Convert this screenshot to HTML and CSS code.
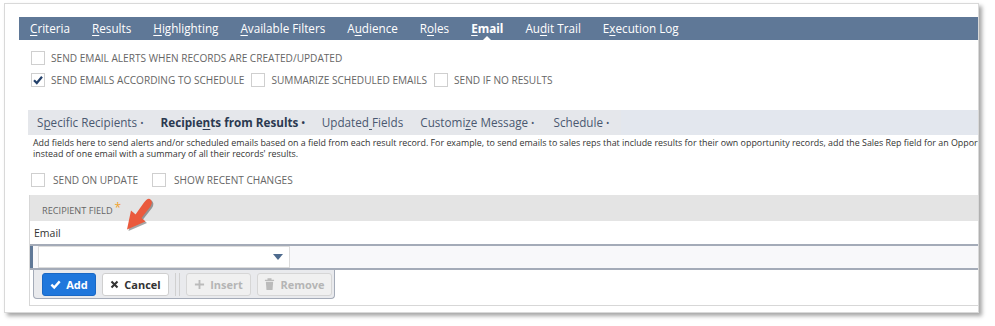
FILE: index.html
```html
<!DOCTYPE html>
<html>
<head>
<meta charset="utf-8">
<link rel="stylesheet" href="styles.css">
</head>
<body>
<div class="panel">
  <nav class="tabs">
    <span class="tab"><u>C</u>riteria</span>
    <span class="tab"><u>R</u>esults</span>
    <span class="tab"><u>H</u>ighlighting</span>
    <span class="tab"><u>A</u>vailable Filters</span>
    <span class="tab">A<u>u</u>dience</span>
    <span class="tab">R<u>o</u>les</span>
    <span class="tab active"><u>E</u>mail</span>
    <span class="tab">Au<u>d</u>it Trail</span>
    <span class="tab">E<u>x</u>ecution Log</span>
  </nav>

  <div class="opts">
    <div class="optrow">
      <label class="chk"><span class="box"></span>SEND EMAIL ALERTS WHEN RECORDS ARE CREATED/UPDATED</label>
    </div>
    <div class="optrow">
      <label class="chk"><span class="box checked"><svg viewBox="0 0 14 14" width="14" height="14"><path d="M3 7.2 L5.8 10 L11 3.8" fill="none" stroke="#24416b" stroke-width="2.2"/></svg></span>SEND EMAILS ACCORDING TO SCHEDULE</label>
      <label class="chk"><span class="box"></span>SUMMARIZE SCHEDULED EMAILS</label>
      <label class="chk"><span class="box"></span>SEND IF NO RESULTS</label>
    </div>
  </div>

  <div class="sub">
    <div class="subbar">
      <div class="subtabs">
        <span class="stab">S<u>p</u>ecific Recipients <span class="dot">•</span></span>
        <span class="stab active">Recipie<u>n</u>ts from Results <span class="dot">•</span></span>
        <span class="stab">Updated<u> </u>Fields</span>
        <span class="stab">Customi<u>z</u>e Message <span class="dot">•</span></span>
        <span class="stab last">Schedule <span class="dot">•</span></span>
      </div>
    </div>
    <p class="desc">Add fields here to send alerts and/or scheduled emails based on a field from each result record. For example, to send emails to sales reps that include results for their own opportunity records, add the Sales Rep field for an Opportunity record<br>instead of one email with a summary of all their records' results.</p>

    <div class="opts2">
      <label class="chk"><span class="box"></span>SEND ON UPDATE</label>
      <label class="chk"><span class="box"></span>SHOW RECENT CHANGES</label>
    </div>

    <div class="grid">
      <div class="ghead">RECIPIENT FIELD<span class="req">*</span></div>
      <div class="grow">Email</div>
      <div class="gedit">
        <div class="select"><span class="caret"></span></div>
      </div>
      <div class="btnbar">
        <button class="btn primary"><svg viewBox="0 0 12 12" width="11" height="11"><path d="M1.5 6.2 L4.6 9.2 L10.6 2.6" fill="none" stroke="#fff" stroke-width="2.6"/></svg>Add</button>
        <button class="btn cancel"><svg viewBox="0 0 12 12" width="9" height="9"><path d="M2 2 L10 10 M10 2 L2 10" fill="none" stroke="#333" stroke-width="2.8"/></svg>Cancel</button>
        <span class="sep"></span>
        <button class="btn disabled ins"><svg viewBox="0 0 12 12" width="11" height="11"><path d="M6 1 V11 M1 6 H11" fill="none" stroke="#bbb" stroke-width="2"/></svg>Insert</button>
        <button class="btn disabled rem"><svg viewBox="0 0 12 14" width="11" height="13"><path d="M1 2.5 H11 M4.5 2.5 V1 H7.5 V2.5" fill="none" stroke="#bbb" stroke-width="1.4"/><path d="M2 4 H10 L9.3 13 H2.7 Z" fill="#bbb"/></svg>Remove</button>
      </div>
    </div>
  </div>

  <svg class="arrow" viewBox="0 0 40 40" width="40" height="40">
    <g transform="translate(1.5,1.5)" opacity="0.35">
      <path d="M28 2 Q31.5 4.5 28.5 9.5 L19.5 21 L23.5 24.5 L5 32.5 L9 13.5 L13.5 17.5 L22 5.5 Q25.5 0.5 28 2 Z" fill="#000"/>
    </g>
    <path d="M28 2 Q31.5 4.5 28.5 9.5 L19.5 21 L23.5 24.5 L5 32.5 L9 13.5 L13.5 17.5 L22 5.5 Q25.5 0.5 28 2 Z" fill="#ea5a3d"/>
  </svg>
</div>
</body>
</html>
```

FILE: styles.css
```css
html, body {
  margin: 0;
  padding: 0;
  background: #fff;
}
body {
  font-family: "Open Sans", "Liberation Sans", sans-serif;
  width: 995px;
  height: 326px;
  overflow: hidden;
}
.panel {
  position: relative;
  margin: 3px 0 0 4px;
  width: 975px;
  height: 310px;
  border: 1px solid #d9d9d9;
  box-shadow: 3px 3px 4px rgba(0, 0, 0, 0.35);
  box-sizing: border-box;
  padding: 13px 0 0 14px;
  background: #fff;
}
.tabs {
  display: flex;
  align-items: center;
  gap: 22px;
  height: 23px;
  padding-left: 11px;
  background: #5f7897;
  color: #fff;
  font-size: 11.7px;
}
.tab {
  position: relative;
  white-space: nowrap;
  line-height: 23px;
}
.tab u {
  text-decoration-thickness: 1px;
  text-underline-offset: 2px;
}
.tab.active {
  font-weight: 700;
}
.tab.active::after {
  content: "";
  position: absolute;
  left: 50%;
  bottom: 0;
  margin-left: -4px;
  border-left: 4px solid transparent;
  border-right: 4px solid transparent;
  border-bottom: 4px solid #fff;
}
.opts {
  padding: 11px 0 0 12px;
  height: 70px;
  box-sizing: border-box;
}
.optrow {
  display: flex;
  gap: 7px;
  height: 22px;
  align-items: flex-start;
}
.chk {
  display: flex;
  align-items: center;
  gap: 6px;
  font-size: 10.1px;
  color: #666;
  white-space: nowrap;
  height: 14px;
}
.box {
  width: 12px;
  height: 12px;
  border: 1px solid #cfcfcf;
  background: #fff;
  display: inline-flex;
  align-items: center;
  justify-content: center;
  flex: none;
}
.box svg {
  flex: none;
}
.sub {
  margin-left: 9px;
}
.subbar {
  height: 25px;
  background: #e3e7ee;
  display: flex;
}
.subtabs {
  display: flex;
  align-items: center;
  background: #e5e7eb;
  padding-right: 4px;
}
.stab {
  padding: 0 8px 0 9px;
  font-size: 11.7px;
  color: #4a5870;
  white-space: nowrap;
  line-height: 25px;
}
.stab.last {
  padding-left: 11px;
}
.stab.active {
  font-weight: 700;
  color: #2b3950;
}
.stab u {
  text-decoration-thickness: 1px;
  text-underline-offset: 2px;
}
.dot {
  font-size: 9px;
  vertical-align: 1px;
}
.desc {
  margin: 0;
  padding: 3px 0 0 5px;
  font-size: 8.9px;
  line-height: 10.5px;
  color: #333;
  white-space: nowrap;
  overflow: hidden;
  width: 950px;
  height: 35px;
  box-sizing: border-box;
}
.opts2 {
  display: flex;
  gap: 14px;
  padding: 3px 0 0 3px;
  height: 25px;
  box-sizing: border-box;
}
.opts2 .chk {
  gap: 8px;
}
.grid {
  margin-left: 1px;
  width: 949px;
  border-left: 1px solid #d7d7d7;
  border-bottom: 1px solid #d7d7d7;
  height: 111px;
  box-sizing: border-box;
}
.ghead {
  height: 26px;
  box-sizing: border-box;
  padding: 4px 0 0 12px;
  background: #e4e4e4;
  font-size: 9.2px;
  color: #666;
  display: flex;
  align-items: center;
}
.req {
  color: #f0a22c;
  font-size: 12px;
  margin-left: 2px;
  position: relative;
  top: -3px;
}
.grow {
  height: 23px;
  font-size: 10.5px;
  color: #333;
  display: flex;
  align-items: center;
  padding-left: 4px;
  background: #fff;
}
.gedit {
  height: 22px;
  border-top: 2px solid #a4abb8;
  border-bottom: 2px solid #a4abb8;
  background: #f8f8fa;
  display: flex;
  align-items: center;
  padding-left: 8px;
  position: relative;
}
.gedit::before {
  content: "";
  position: absolute;
  left: 0;
  top: 0;
  bottom: 0;
  width: 3px;
  background: #5f7897;
}
.select {
  width: 250px;
  height: 20px;
  border: 1px solid #dcdcdc;
  background: #fff;
  position: relative;
}
.caret {
  position: absolute;
  right: 6px;
  top: 7px;
  border-left: 5px solid transparent;
  border-right: 5px solid transparent;
  border-top: 6px solid #4e6b8e;
}
.btnbar {
  margin-left: 3px;
  width: 302px;
  height: 29px;
  box-sizing: border-box;
  border: 1px solid #a4abb8;
  border-top: none;
  border-radius: 0 0 4px 4px;
  background: #e9eaed;
  display: flex;
  align-items: center;
  gap: 6px;
  padding: 0 0 0 8px;
}
.btn {
  font-family: "Open Sans", "Liberation Sans", sans-serif;
  height: 23px;
  border: 1px solid #cfcfcf;
  border-radius: 3px;
  background: #fafafa;
  font-size: 11px;
  font-weight: 700;
  color: #333;
  display: flex;
  align-items: center;
  justify-content: center;
  gap: 5px;
  padding: 0;
  box-sizing: border-box;
  flex: none;
}
.btn svg {
  flex: none;
}
.btn.primary {
  width: 54px;
  background: #1f77dc;
  border-color: #1a68c4;
  color: #fff;
}
.btn.cancel {
  width: 67px;
  background: #fff;
}
.btn.disabled {
  color: #b5b5b5;
  background: #f0f0f0;
  border-color: #d6d6d6;
}
.btn.ins {
  width: 65px;
}
.btn.rem {
  width: 75px;
}
.sep {
  width: 3px;
  height: 23px;
  border-left: 1px solid #d0d0d0;
  border-right: 1px solid #d0d0d0;
  flex: none;
}
.arrow {
  position: absolute;
  left: 117px;
  top: 193px;
}
```
